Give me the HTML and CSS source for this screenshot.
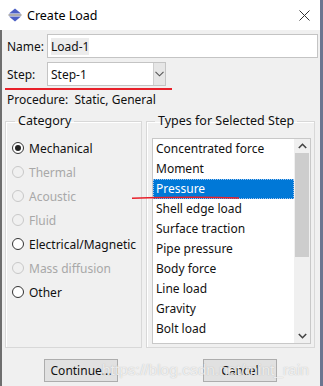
FILE: index.html
```html
<!DOCTYPE html>
<html lang="en">
<head>
    <meta charset="UTF-8">
    <meta name="viewport" content="width=device-width, initial-scale=1.0">
    <title>Create Load</title>
    <link rel="stylesheet" href="styles.css">
</head>
<body>
    <div class="window">
        <div class="titlebar">
            <svg class="app-icon" width="14" height="14" viewBox="0 0 14 14">
                <polygon points="7,0.5 13,5.5 1,5.5" fill="#4b5fc4"/>
                <rect x="0.5" y="6.3" width="13" height="1.4" fill="#8a8a8a"/>
                <polygon points="1,8.5 13,8.5 7,13.5" fill="#4b5fc4"/>
            </svg>
            <div class="title">Create Load</div>
            <svg class="close" width="11" height="11" viewBox="0 0 11 11">
                <path d="M0.5 0.5 L10.5 10.5 M10.5 0.5 L0.5 10.5" stroke="#333" stroke-width="1"/>
            </svg>
        </div>

        <div class="content">
            <div class="field-row name-row">
                <label class="field-label">Name:</label>
                <div class="text-input"><span class="selected-text">Load-1</span></div>
            </div>

            <div class="field-row">
                <label class="field-label">Step:</label>
                <div class="combo">
                    <span class="combo-value">Step-1</span>
                    <span class="combo-button">
                        <svg width="9" height="6" viewBox="0 0 9 6">
                            <path d="M0.5 0.8 L4.5 4.8 L8.5 0.8" fill="none" stroke="#555" stroke-width="1.1"/>
                        </svg>
                    </span>
                </div>
            </div>
            <div class="red-mark"></div>

            <div class="procedure">Procedure:&nbsp; Static, General</div>

            <div class="groups">
                <fieldset class="group category">
                    <legend>Category</legend>
                    <div class="radio checked"><span class="dot"></span>Mechanical</div>
                    <div class="radio disabled"><span class="dot"></span>Thermal</div>
                    <div class="radio disabled"><span class="dot"></span>Acoustic</div>
                    <div class="radio disabled"><span class="dot"></span>Fluid</div>
                    <div class="radio"><span class="dot"></span>Electrical/Magnetic</div>
                    <div class="radio disabled"><span class="dot"></span>Mass diffusion</div>
                    <div class="radio"><span class="dot"></span>Other</div>
                </fieldset>

                <fieldset class="group types">
                    <legend>Types for Selected Step</legend>
                    <div class="listbox">
                        <ul class="items">
                            <li>Concentrated force</li>
                            <li>Moment</li>
                            <li class="selected">Pressure</li>
                            <li>Shell edge load</li>
                            <li>Surface traction</li>
                            <li>Pipe pressure</li>
                            <li>Body force</li>
                            <li>Line load</li>
                            <li>Gravity</li>
                            <li>Bolt load</li>
                        </ul>
                        <div class="scrollbar">
                            <span class="arrow">
                                <svg width="9" height="6" viewBox="0 0 9 6"><path d="M0.8 5 L4.5 1.3 L8.2 5" fill="none" stroke="#444" stroke-width="1.6"/></svg>
                            </span>
                            <div class="track"><div class="thumb"></div></div>
                            <span class="arrow">
                                <svg width="9" height="6" viewBox="0 0 9 6"><path d="M0.8 1 L4.5 4.7 L8.2 1" fill="none" stroke="#444" stroke-width="1.6"/></svg>
                            </span>
                        </div>
                    </div>
                </fieldset>
            </div>

            <div class="buttons">
                <button class="btn">Continue...</button>
                <button class="btn">Cancel</button>
            </div>
        </div>

        <!-- annotation stroke drawn over the list -->
        <svg class="pen-mark" width="110" height="6" viewBox="0 0 110 6">
            <path d="M1 3.2 C30 2.4 70 1.6 108 3" fill="none" stroke="#e8202a" stroke-width="1.6"/>
        </svg>
        <div class="watermark">https://blog.csdn.net/mint_rain</div>
    </div>
</body>
</html>
```

FILE: styles.css
```css
body {
    margin: 0;
    padding: 0;
    font-family: "Noto Sans", "Noto Sans CJK SC", sans-serif;
    font-size: 12px;
    color: #111;
    background-color: #6f7685;
}

.window {
    position: relative;
    width: 323px;
    height: 386px;
    overflow: hidden;
    background-color: #f0f0f0;
    box-sizing: border-box;
    border-right: 3px solid #6c7590;
}

.titlebar {
    height: 30px;
    background-color: #fff;
    display: flex;
    align-items: center;
    padding: 0 10px 0 8px;
}

.titlebar .app-icon {
    flex: none;
    margin-right: 5px;
}

.titlebar .title {
    flex: 1;
    font-size: 12.5px;
    color: #000;
}

.titlebar .close {
    flex: none;
}

.content {
    border-left: 2px solid #6e6e6e;
    padding: 4px 5px 0 3px;
    height: 356px;
    box-sizing: border-box;
}

.field-row {
    display: flex;
    align-items: center;
    height: 24px;
    margin-bottom: 4px;
}

.name-row {
    margin-right: -3px;
}

.field-label {
    width: 40px;
    padding-left: 2px;
    flex: none;
}

.text-input {
    flex: 1;
    height: 24px;
    box-sizing: border-box;
    border: 1px solid #c4c4c4;
    background-color: #fff;
    display: flex;
    align-items: center;
    padding-left: 3px;
}

.selected-text {
    background-color: #ececec;
}

.combo {
    width: 119px;
    height: 24px;
    box-sizing: border-box;
    border: 1px solid #c4c4c4;
    background-color: #fff;
    display: flex;
    align-items: center;
    padding-left: 3px;
}

.combo-value {
    flex: 1;
}

.combo-button {
    width: 12px;
    height: 22px;
    box-sizing: border-box;
    background-color: #e6e6e6;
    border-left: 1px solid #cfcfcf;
    display: flex;
    align-items: center;
    justify-content: center;
}

.red-mark {
    width: 167px;
    height: 2px;
    background-color: #e8202a;
    margin: -2px 0 0 0;
}

.procedure {
    height: 20px;
    line-height: 20px;
    padding-left: 2px;
}

.groups {
    display: flex;
    gap: 4px;
    margin-top: 3px;
    height: 235px;
}

.group {
    margin: 0;
    border: 1px solid #d8d8d8;
    box-shadow: inset 1px 1px 0 #fff;
    box-sizing: border-box;
    min-width: 0;
}

.group legend {
    padding: 0 3px;
    margin-left: 3px;
    font-size: 12.5px;
    line-height: 16px;
}

.category {
    width: 137px;
    padding: 7px 0 0 6px;
}

.radio {
    display: flex;
    align-items: center;
    height: 24px;
    white-space: nowrap;
}

.radio .dot {
    flex: none;
    width: 12px;
    height: 12px;
    box-sizing: border-box;
    border: 1px solid #333;
    border-radius: 50%;
    margin-right: 5px;
    display: flex;
    align-items: center;
    justify-content: center;
    background-color: #fff;
}

.radio.checked .dot::after {
    content: "";
    width: 6px;
    height: 6px;
    border-radius: 50%;
    background-color: #222;
}

.radio.disabled {
    color: #a8a8a8;
}

.radio.disabled .dot {
    border-color: #c8c8c8;
    background-color: #f0f0f0;
}

.types {
    flex: 1;
    padding: 0 3px 4px 5px;
}

.listbox {
    display: flex;
    height: 206px;
    margin-top: 9px;
    border: 1px solid #c8c8c8;
    background-color: #fff;
    box-sizing: border-box;
}

.items {
    flex: 1;
    list-style: none;
    margin: 0;
    padding: 0;
    overflow: hidden;
}

.items li {
    height: 20px;
    line-height: 20px;
    padding-left: 3px;
    white-space: nowrap;
}

.items li.selected {
    background-color: #0078d7;
    color: #fff;
    outline: 1px dotted #9fc4ee;
    outline-offset: -1px;
}

.scrollbar {
    width: 16px;
    display: flex;
    flex-direction: column;
    background-color: #f0f0f0;
}

.scrollbar .arrow {
    height: 14px;
    display: flex;
    align-items: center;
    justify-content: center;
}

.scrollbar .track {
    flex: 1;
    padding: 0 1px;
}

.scrollbar .thumb {
    height: 104px;
    background-color: #cdcdcd;
}

.buttons {
    display: flex;
    gap: 85px;
    margin-top: 11px;
    padding-left: 39px;
}

.btn {
    width: 74px;
    height: 23px;
    font-family: "Noto Sans", sans-serif;
    font-size: 12px;
    line-height: 21px;
    color: #111;
    background-color: #e1e1e1;
    border: 1px solid #adadad;
    padding: 0;
}

.pen-mark {
    position: absolute;
    left: 131px;
    top: 195px;
}

.watermark {
    position: absolute;
    left: 102px;
    top: 361px;
    font-family: "Liberation Sans", Arial, sans-serif;
    font-size: 15.5px;
    color: rgba(255, 255, 255, 0.75);
    text-shadow: 0 0 1px rgba(120, 120, 120, 0.5);
    white-space: nowrap;
}
```
